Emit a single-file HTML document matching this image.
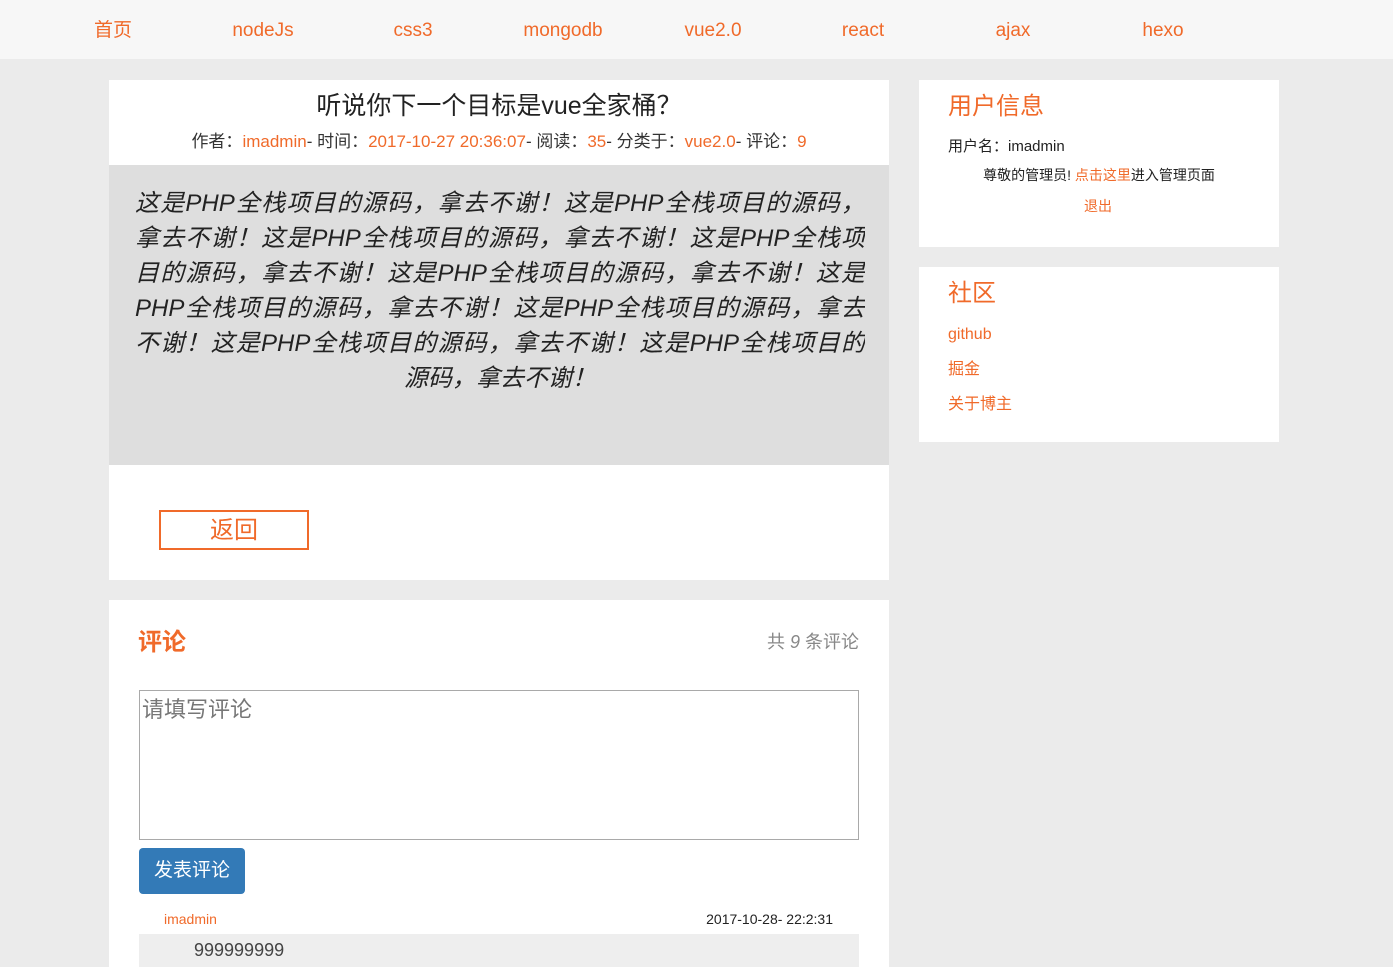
<!DOCTYPE html>
<html><head><meta charset="utf-8"><style>
*{margin:0;padding:0;box-sizing:border-box}
body{width:1393px;height:967px;overflow:hidden;background:#ebebeb;font-family:"Liberation Sans","Noto Sans CJK SC",sans-serif;color:#333;position:relative}
.o{color:#f06a2a}
.nav{position:absolute;left:0;top:0;width:1393px;height:59px;background:#f7f7f7}
.nav a{position:absolute;top:18px;width:150px;text-align:center;font-size:19px;color:#f06a2a;line-height:26px}
.box{position:absolute;background:#fff}
.abs{position:absolute;white-space:nowrap}
.content{position:absolute;left:0;top:85px;width:780px;height:300px;background:#dedede;padding:0 24px 0 26px}
.content div{font-size:24px;font-style:italic;line-height:35px;height:35px;color:#222;text-align:justify;text-align-last:justify;white-space:nowrap;overflow:hidden}
.content div.l{text-align:center;text-align-last:center}
</style></head><body>
<div class="nav">
<a style="left:38px">首页</a><a style="left:188px">nodeJs</a><a style="left:338px">css3</a><a style="left:488px">mongodb</a><a style="left:638px">vue2.0</a><a style="left:788px">react</a><a style="left:938px">ajax</a><a style="left:1088px">hexo</a>
</div>

<div class="box" style="left:109px;top:80px;width:780px;height:500px">
<div class="abs" style="left:0;width:780px;top:9px;text-align:center;font-size:25px;line-height:34px;color:#222">听说你下一个目标是vue全家桶？</div>
<div class="abs" style="left:0;width:780px;top:50px;text-align:center;font-size:17px;line-height:24px;color:#333">作者：<span class="o">imadmin</span>- 时间：<span class="o">2017-10-27 20:36:07</span>- 阅读：<span class="o">35</span>- 分类于：<span class="o">vue2.0</span>- 评论：<span class="o">9</span></div>
<div class="content" style="padding-top:21px">
<div>这是PHP全栈项目的源码，拿去不谢！这是PHP全栈项目的源码，</div>
<div>拿去不谢！这是PHP全栈项目的源码，拿去不谢！这是PHP全栈项</div>
<div>目的源码，拿去不谢！这是PHP全栈项目的源码，拿去不谢！这是</div>
<div>PHP全栈项目的源码，拿去不谢！这是PHP全栈项目的源码，拿去</div>
<div>不谢！这是PHP全栈项目的源码，拿去不谢！这是PHP全栈项目的</div>
<div class="l">源码，拿去不谢！</div>
</div>
<div class="abs" style="left:50px;top:430px;width:150px;height:40px;border:2px solid #f06a2a;text-align:center;font-size:24px;line-height:38px;color:#f06a2a">返回</div>
</div>

<div class="box" style="left:109px;top:600px;width:780px;height:367px">
<div class="abs o" style="left:29px;top:27px;font-size:24px;font-weight:bold;line-height:32px">评论</div>
<div class="abs" style="right:30px;top:30px;font-size:18px;color:#888;line-height:24px">共 <i>9</i> 条评论</div>
<div class="abs" style="left:30px;top:90px;width:720px;height:150px;border:1px solid #a9a9a9;font-size:22px;color:#777;padding:2px 2px;line-height:34px">请填写评论</div>
<div class="abs" style="left:30px;top:248px;width:106px;height:46px;background:#337ab7;border-radius:4px;color:#fff;font-size:19px;text-align:center;line-height:46px">发表评论</div>
<div class="abs o" style="left:55px;top:310px;font-size:14px;line-height:18px">imadmin</div>
<div class="abs" style="right:56px;top:310px;font-size:14px;line-height:18px;color:#222">2017-10-28- 22:2:31</div>
<div class="abs" style="left:30px;top:334px;width:720px;height:33px;background:#eee;font-size:18px;padding-left:55px;line-height:33px;color:#444">999999999</div>
</div>

<div class="box" style="left:919px;top:80px;width:360px;height:167px">
<div class="abs o" style="left:29px;top:10px;font-size:24px;line-height:34px">用户信息</div>
<div class="abs" style="left:29px;top:57px;font-size:15px;line-height:20px;color:#222">用户名：imadmin</div>
<div class="abs" style="left:0;width:360px;top:85px;text-align:center;font-size:14px;line-height:20px;color:#222">尊敬的管理员! <span class="o">点击这里</span>进入管理页面</div>
<div class="abs o" style="left:0;width:358px;top:116px;text-align:center;font-size:14px;line-height:20px">退出</div>
</div>

<div class="box" style="left:919px;top:267px;width:360px;height:175px">
<div class="abs o" style="left:29px;top:10px;font-size:24px;line-height:34px">社区</div>
<div class="abs o" style="left:29px;top:57px;font-size:16px;line-height:22px">github</div>
<div class="abs o" style="left:29px;top:92px;font-size:16px;line-height:22px">掘金</div>
<div class="abs o" style="left:29px;top:127px;font-size:16px;line-height:22px">关于博主</div>
</div>
</body></html>
